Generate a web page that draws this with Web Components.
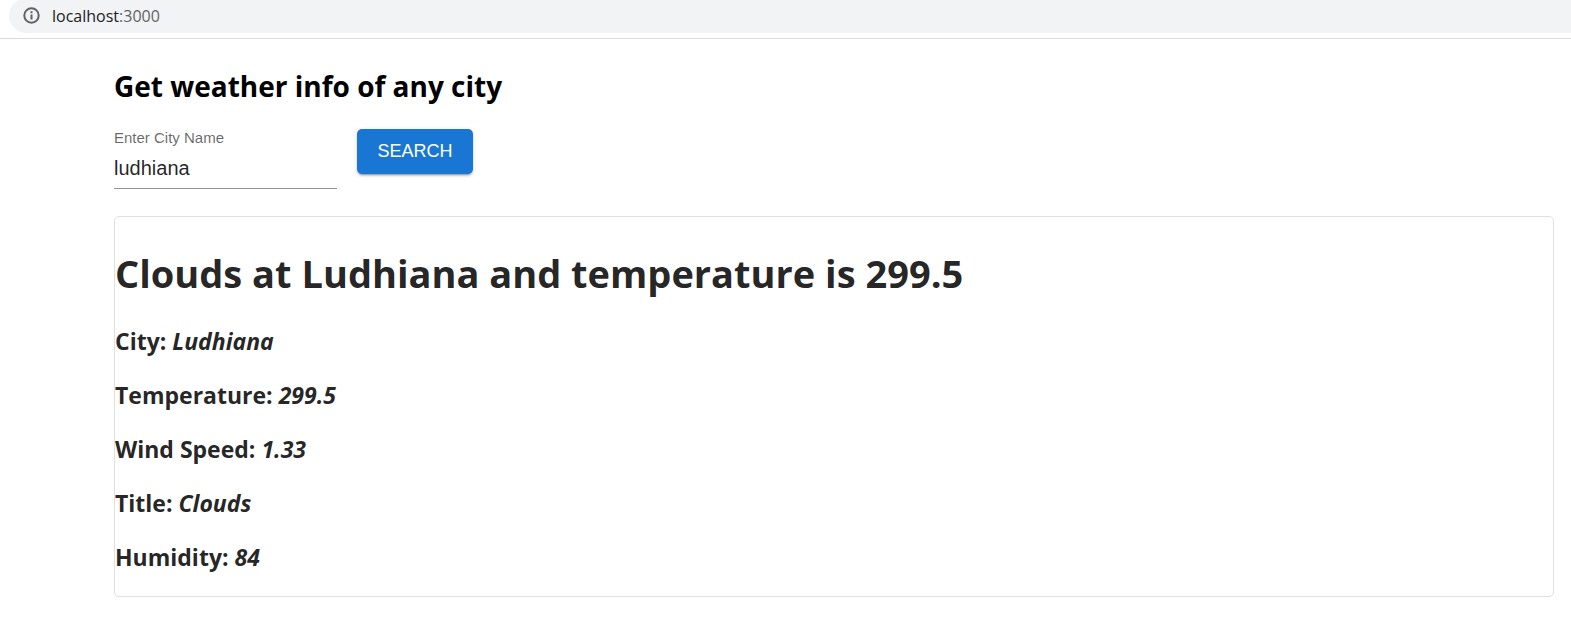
<!DOCTYPE html>
<html lang="en">
<head>
<meta charset="utf-8">
<title>Weather info</title>
<style>
body { margin: 0; background: #fff; font-family: "Open Sans", "Noto Sans", sans-serif; }
</style>
</head>
<body>
<address-bar><span slot="host">localhost</span><span slot="port">:3000</span></address-bar>
<weather-app></weather-app>
<script>
function define(name, html) {
  const template = document.createElement('template');
  template.innerHTML = html;
  customElements.define(name, class extends HTMLElement {
    constructor() {
      super();
      this.attachShadow({ mode: 'open' }).append(template.content.cloneNode(true));
    }
  });
}

define('address-bar', `
<style>
  :host { display: block; overflow: hidden; padding: 0 0 5px 9px; border-bottom: 1px solid #dadce0; }
  .pill { display: flex; align-items: center; gap: 12px; box-sizing: border-box; height: 35px; margin-top: -2px; padding-left: 14px; background: #f1f3f4; border-radius: 18px 0 0 18px; font-size: 16px; line-height: 24px; color: #202124; }
  svg { display: block; width: 17px; height: 17px; }
  .port { color: #5f6368; }
</style>
<div class="pill">
  <svg viewBox="0 0 17 17" aria-hidden="true"><circle cx="8.5" cy="8.5" r="7.2" fill="none" stroke="#5f6368" stroke-width="2"/><path d="M7.5 4.3h2v2h-2zM7.5 7.5h2v5h-2z" fill="#5f6368"/></svg>
  <div><slot name="host"></slot><span class="port"><slot name="port"></slot></span></div>
</div>`);

define('city-field', `
<style>
  :host { display: block; width: 223px; font-family: "Liberation Sans", Arial, sans-serif; }
  label { display: block; font-size: 15px; line-height: 18px; color: rgba(0,0,0,.6); }
  input { display: block; box-sizing: border-box; width: 100%; height: 42px; margin: 0; padding: 2px 0 0; border: 0; border-bottom: 1px solid #949494; border-radius: 0; outline: 0; background: none; font: 20px/24px "Liberation Sans", Arial, sans-serif; color: rgba(0,0,0,.87); }
</style>
<label for="city">Enter City Name</label>
<input id="city" type="text" value="ludhiana">`);

define('search-button', `
<style>
  :host { display: block; }
  button { display: block; min-width: 116px; margin: 0; padding: 7px 20px 8px; border: 0; border-radius: 5px; background: #1976d2; color: #fff; font: 18px/30px "Liberation Sans", Arial, sans-serif; text-transform: uppercase; box-shadow: 0 3px 1px -2px rgba(0,0,0,.2), 0 2px 2px rgba(0,0,0,.14), 0 1px 5px rgba(0,0,0,.12); }
</style>
<button type="button"><slot></slot></button>`);

define('weather-fact', `
<style>
  :host { display: block; }
  h3 { margin: 0; font-size: 23px; line-height: 30px; font-weight: 700; }
</style>
<h3><slot name="label"></slot>: <i><slot></slot></i></h3>`);

define('weather-card', `
<style>
  :host { display: block; border: 1px solid #e0e0e0; border-radius: 5px; color: rgba(0,0,0,.87); }
  h1 { margin: 28px 0 25px; font-size: 38px; line-height: 56px; font-weight: 700; }
  .facts { display: grid; gap: 24px; padding-bottom: 24px; }
</style>
<h1><slot name="title"></slot></h1>
<div class="facts"><slot></slot></div>`);

define('weather-app', `
<style>
  :host { display: block; padding: 26px 17px 0 114px; }
  h2 { margin: 0 0 22px; font-size: 28px; line-height: 42px; font-weight: 700; color: #000; }
  form { display: flex; align-items: flex-start; gap: 20px; margin: 0 0 27px; }
</style>
<h2>Get weather info of any city</h2>
<form><city-field></city-field><search-button>Search</search-button></form>
<weather-card>
  <span slot="title">Clouds at Ludhiana and temperature is 299.5</span>
  <weather-fact><span slot="label">City</span>Ludhiana</weather-fact>
  <weather-fact><span slot="label">Temperature</span>299.5</weather-fact>
  <weather-fact><span slot="label">Wind Speed</span>1.33</weather-fact>
  <weather-fact><span slot="label">Title</span>Clouds</weather-fact>
  <weather-fact><span slot="label">Humidity</span>84</weather-fact>
</weather-card>`);
</script>
</body>
</html>
